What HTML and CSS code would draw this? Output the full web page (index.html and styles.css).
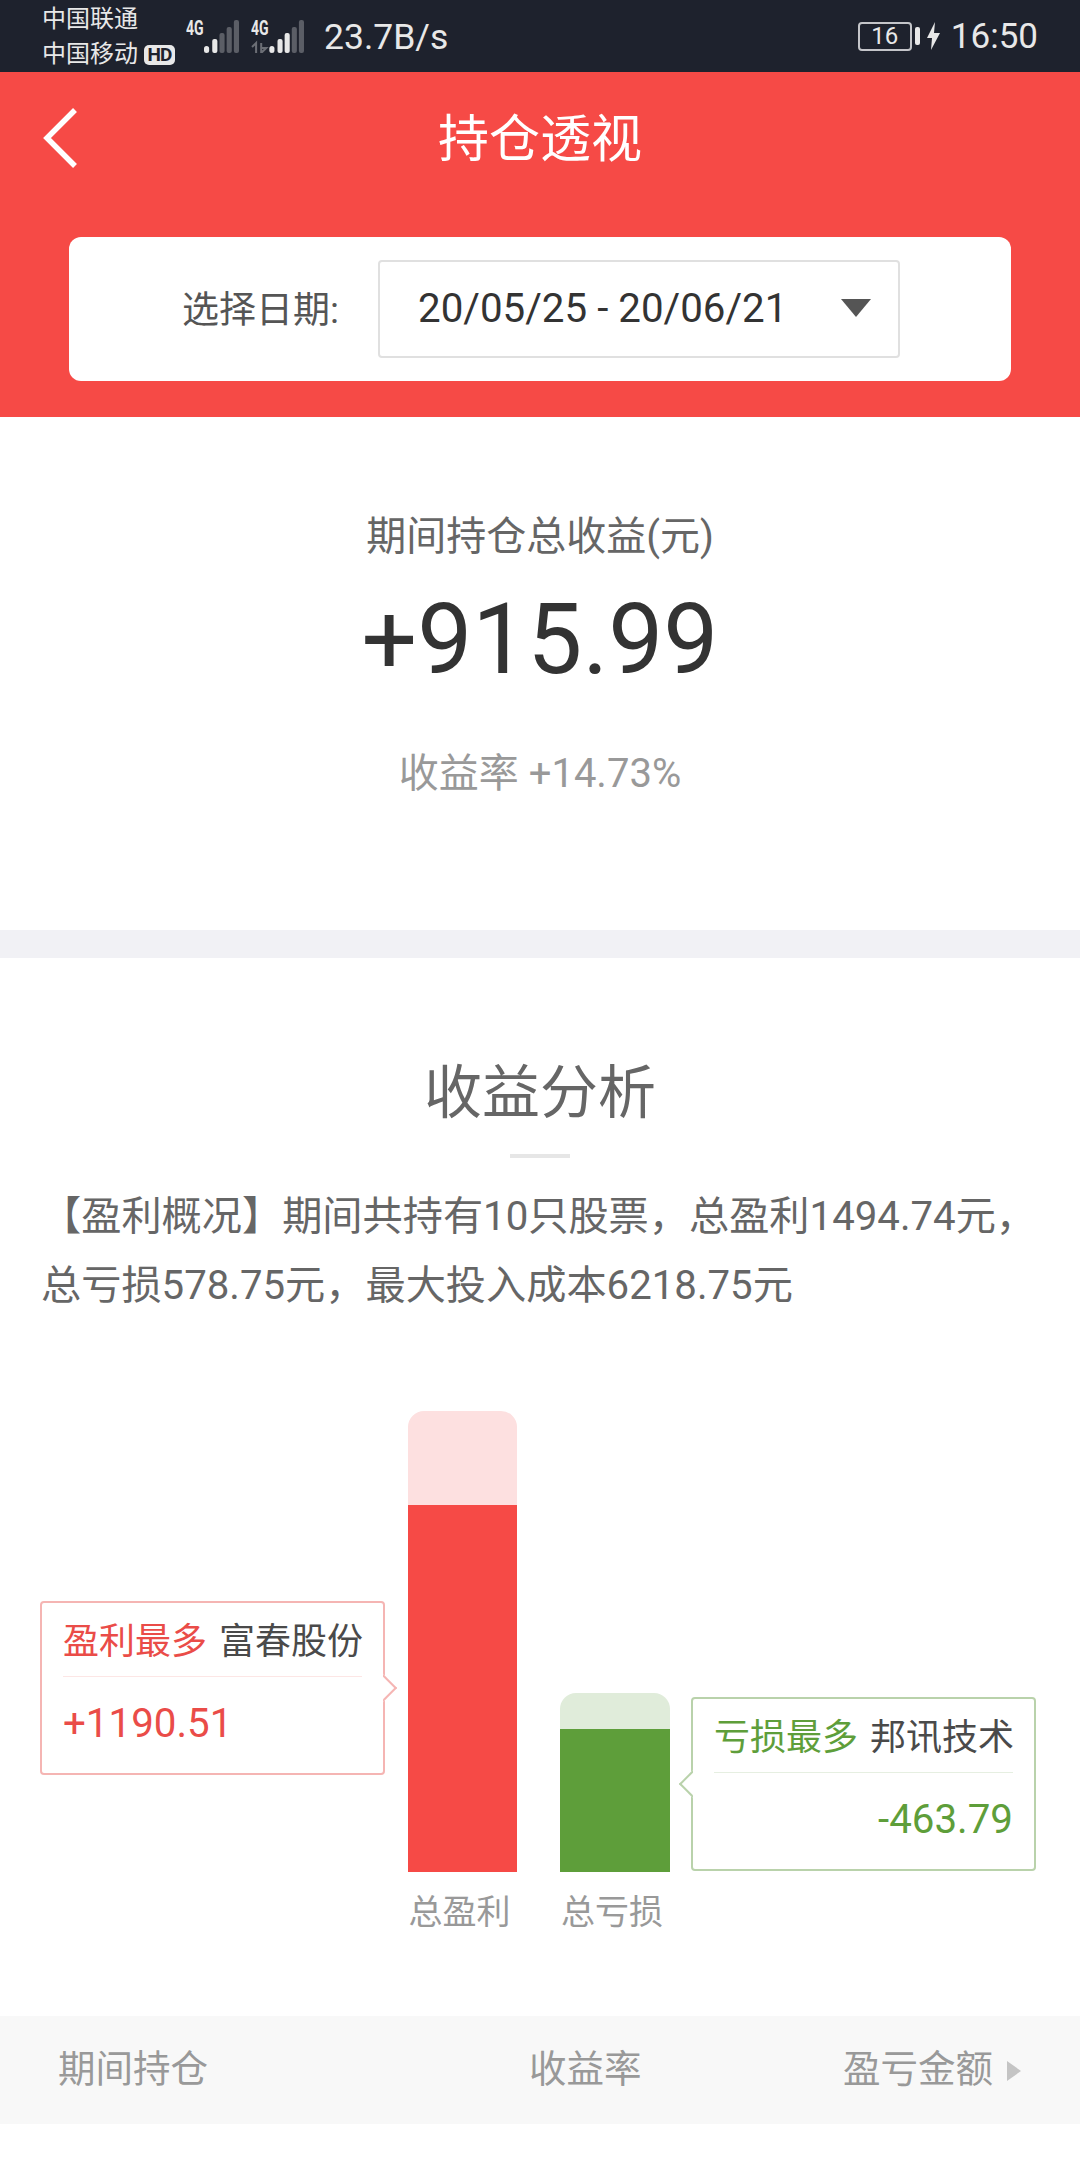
FILE: index.html
```html
<!DOCTYPE html>
<html lang="zh">
<head>
    <meta charset="UTF-8">
    <meta name="viewport" content="width=device-width, initial-scale=1.0">
    <title>持仓透视</title>
    <link rel="stylesheet" href="styles.css">
</head>
<body>
    <div class="statusbar">
        <div class="carriers">
            <div>中国联通</div>
            <div>中国移动<span class="hd">HD</span></div>
        </div>
        <div class="signal">
            <span class="net">4G</span>
            <svg width="35" height="33" viewBox="0 0 34 33" preserveAspectRatio="none">
                <rect x="0" y="26" width="5" height="7" rx="2.5" fill="#e8e8e8"/>
                <rect x="8" y="19" width="5" height="14" rx="2" fill="#e8e8e8"/>
                <rect x="15" y="13" width="5" height="20" rx="2" fill="#5b5e66"/>
                <rect x="22" y="7" width="5" height="26" rx="2" fill="#5b5e66"/>
                <rect x="29" y="0" width="5" height="33" rx="2" fill="#5b5e66"/>
            </svg>
        </div>
        <div class="signal second">
            <span class="net">4G</span>
            <svg width="53" height="33" viewBox="0 0 52 33" preserveAspectRatio="none">
                <path d="M1 27l4-4v10M10 23v10l5-5h-5" stroke="#6b6e75" stroke-width="2" fill="none"/>
                <rect x="18" y="26" width="5" height="7" rx="2.5" fill="#e8e8e8"/>
                <rect x="26" y="19" width="5" height="14" rx="2" fill="#e8e8e8"/>
                <rect x="33" y="13" width="5" height="20" rx="2" fill="#e8e8e8"/>
                <rect x="40" y="7" width="5" height="26" rx="2" fill="#5b5e66"/>
                <rect x="47" y="0" width="5" height="33" rx="2" fill="#5b5e66"/>
            </svg>
        </div>
        <div class="speed">23.7B/s</div>
        <div class="status-right">
            <div class="battery"><span>16</span></div>
            <div class="battery-tip"></div>
            <svg class="bolt" width="13" height="28" viewBox="0 0 13 28">
                <path d="M8 0L0 16h5l-1 12 9-17H7z" fill="#e8e8e8"/>
            </svg>
            <div class="clock">16:50</div>
        </div>
    </div>

    <header>
        <div class="titlebar">
            <svg class="back" width="38" height="60" viewBox="0 0 38 60">
                <path d="M34 2L6 30l28 28" stroke="white" stroke-width="5.5" fill="none"/>
            </svg>
            <h1>持仓透视</h1>
        </div>
        <div class="date-card">
            <span class="date-label">选择日期:</span>
            <div class="date-select">
                <span>20/05/25 - 20/06/21</span>
                <i class="caret"></i>
            </div>
        </div>
    </header>

    <section class="summary">
        <p class="summary-label">期间持仓总收益(元)</p>
        <p class="summary-value">+915.99</p>
        <p class="summary-rate">收益率 +14.73%</p>
    </section>

    <section class="analysis">
        <h2>收益分析</h2>
        <div class="title-rule"></div>
        <p class="overview">【盈利概况】期间共持有10只股票，总盈利1494.74元，总亏损578.75元，最大投入成本6218.75元</p>

        <div class="chart">
            <div class="bars">
                <div class="bar-col">
                    <div class="bar bar-profit">
                        <div class="bar-fill"></div>
                    </div>
                    <span class="bar-label">总盈利</span>
                </div>
                <div class="bar-col">
                    <div class="bar bar-loss">
                        <div class="bar-fill"></div>
                    </div>
                    <span class="bar-label">总亏损</span>
                </div>
            </div>

            <div class="tip tip-profit">
                <div class="tip-head"><em>盈利最多</em> 富春股份</div>
                <div class="tip-value">+1190.51</div>
            </div>
            <div class="tip tip-loss">
                <div class="tip-head"><em>亏损最多</em> 邦讯技术</div>
                <div class="tip-value">-463.79</div>
            </div>
        </div>
    </section>

    <div class="table-head">
        <span>期间持仓</span>
        <span>收益率</span>
        <span class="col-right">盈亏金额<i class="sort"></i></span>
    </div>
</body>
</html>
```

FILE: styles.css
```css
* {
    box-sizing: border-box;
}
body {
    margin: 0;
    padding: 0;
    width: 1080px;
    height: 2160px;
    overflow: hidden;
    background-color: white;
    font-family: Roboto, "Noto Sans CJK SC", sans-serif;
    color: #333;
}
p, h1, h2 {
    margin: 0;
    font-weight: normal;
}

/* status bar */
.statusbar {
    height: 72px;
    background-color: #1e222d;
    color: #e8e8e8;
    display: flex;
    align-items: center;
    padding-left: 42px;
    padding-right: 42px;
}
.carriers {
    width: 144px;
    padding-top: 2px;
    font-size: 24px;
    line-height: 35px;
    white-space: nowrap;
}
.hd {
    display: inline-block;
    width: 31px;
    height: 20px;
    margin-left: 6px;
    line-height: 20px;
    border-radius: 5px;
    background-color: #e8e8e8;
    color: #1e222d;
    font-size: 19px;
    font-weight: bold;
    letter-spacing: -1px;
    text-align: center;
    vertical-align: 1px;
}
.signal {
    display: flex;
    align-items: flex-start;
}
.signal.second {
    margin-left: 12px;
}
.signal.second svg {
    margin-left: -18px;
}
.net {
    width: 18px;
    font-size: 20px;
    font-weight: bold;
    line-height: 16px;
    white-space: nowrap;
    transform: scaleX(0.7);
    transform-origin: left;
}
.speed {
    margin-left: 20px;
    margin-top: 2px;
    font-size: 35.5px;
}
.status-right {
    margin-left: auto;
    display: flex;
    align-items: center;
}
.battery {
    width: 54px;
    height: 29px;
    border: 2px solid #c4c5c9;
    border-radius: 4px;
    font-size: 24px;
    line-height: 25px;
    text-align: center;
}
.battery-tip {
    width: 5px;
    height: 18px;
    margin-left: 3px;
    border-radius: 2px;
    background-color: #e8e8e8;
}
.bolt {
    margin-left: 7px;
}
.clock {
    margin-left: 11px;
    font-size: 35px;
}

/* red header */
header {
    height: 345px;
    background-color: #f64a46;
}
.titlebar {
    height: 165px;
    position: relative;
    text-align: center;
}
.titlebar h1 {
    color: white;
    font-size: 51px;
    line-height: 136px;
}
.back {
    position: absolute;
    left: 41px;
    top: 36px;
}
.date-card {
    width: 942px;
    height: 144px;
    margin-left: 69px;
    background-color: white;
    border-radius: 12px;
    display: flex;
    align-items: center;
    padding-left: 113px;
}
.date-label {
    width: 196px;
    padding-bottom: 5px;
    font-size: 37px;
    color: #555;
}
.date-select {
    width: 522px;
    height: 98px;
    border: 2px solid #e0e0e0;
    border-radius: 4px;
    display: flex;
    align-items: center;
    justify-content: space-between;
    padding: 0 27px 2px 38px;
    font-size: 40.3px;
    color: #333;
}
.caret {
    border-top: 18px solid #555;
    border-left: 15px solid transparent;
    border-right: 15px solid transparent;
}

/* total */
.summary {
    height: 513px;
    text-align: center;
    padding-top: 97px;
}
.summary-label {
    font-size: 40px;
    line-height: 46px;
    color: #666;
}
.summary-value {
    margin-top: 25px;
    font-size: 98px;
    line-height: 110px;
    color: #333;
}
.summary-rate {
    margin-top: 56px;
    font-size: 40px;
    line-height: 46px;
    color: #999;
}

/* analysis */
.analysis {
    height: 1086px;
    border-top: 28px solid #f1f1f5;
    padding-top: 97px;
}
.analysis h2 {
    text-align: center;
    font-size: 58px;
    line-height: 76px;
    color: #666;
}
.title-rule {
    width: 60px;
    height: 4px;
    margin: 23px auto 0;
    background-color: #e6e6e6;
}
.overview {
    margin: 24px 40px 0 41px;
    font-size: 40.2px;
    line-height: 69px;
    color: #666;
}
.chart {
    position: relative;
    height: 529px;
    margin-top: 91px;
}
.bars {
    display: flex;
    align-items: flex-end;
    height: 100%;
    padding-left: 408px;
    gap: 43px;
}
.bar-col {
    display: flex;
    flex-direction: column;
    align-items: center;
}
.bar {
    display: flex;
    align-items: flex-end;
    border-radius: 16px 16px 0 0;
}
.bar-fill {
    width: 100%;
}
.bar-profit {
    width: 109px;
    height: 461px;
    background-color: #fde0e0;
}
.bar-profit .bar-fill {
    height: 367px;
    background-color: #f64a46;
}
.bar-loss {
    width: 110px;
    height: 179px;
    background-color: #e0ecda;
}
.bar-loss .bar-fill {
    height: 143px;
    background-color: #5e9e3a;
}
.bar-label {
    height: 68px;
    padding-right: 6px;
    line-height: 80px;
    font-size: 34px;
    color: #999;
    white-space: nowrap;
}

/* tooltips beside the bars */
.tip {
    position: absolute;
    width: 345px;
    height: 174px;
    padding: 0 21px;
    background-color: white;
    border: 2px solid;
    border-radius: 4px;
}
.tip::after {
    content: "";
    position: absolute;
    top: 75px;
    width: 16px;
    height: 16px;
    background-color: white;
    border: 2px solid;
    border-color: inherit;
    transform: rotate(45deg);
}
.tip-head {
    height: 74px;
    line-height: 78px;
    font-size: 36px;
    color: #4a4a4a;
    white-space: nowrap;
    border-bottom: 1px solid;
}
.tip-head em {
    font-style: normal;
    margin-right: 3px;
}
.tip-value {
    line-height: 94px;
    font-size: 40.3px;
}
.tip-profit {
    left: 40px;
    top: 190px;
    border-color: #f5b5b3;
}
.tip-profit::after {
    right: -10px;
    border-left-color: transparent;
    border-bottom-color: transparent;
}
.tip-profit .tip-head {
    border-bottom-color: #fde6e5;
}
.tip-profit em, .tip-profit .tip-value {
    color: #ea4c48;
}
.tip-loss {
    left: 691px;
    top: 286px;
    border-color: #b9d2ab;
}
.tip-loss::after {
    left: -10px;
    border-right-color: transparent;
    border-top-color: transparent;
}
.tip-loss .tip-head {
    text-align: right;
    border-bottom-color: #e6efe1;
}
.tip-loss em, .tip-loss .tip-value {
    color: #5e9e3a;
}
.tip-loss .tip-value {
    text-align: right;
}

/* list header */
.table-head {
    height: 108px;
    background-color: #f8f8f8;
    display: grid;
    grid-template-columns: 471px 1fr auto;
    align-items: center;
    padding: 0 59px 10px 58px;
    font-size: 37.5px;
    color: #999;
}
.col-right {
    white-space: nowrap;
}
.sort {
    display: inline-block;
    margin-left: 14px;
    border-left: 14px solid #c4c4c4;
    border-top: 10px solid transparent;
    border-bottom: 10px solid transparent;
    vertical-align: 1px;
}
```
